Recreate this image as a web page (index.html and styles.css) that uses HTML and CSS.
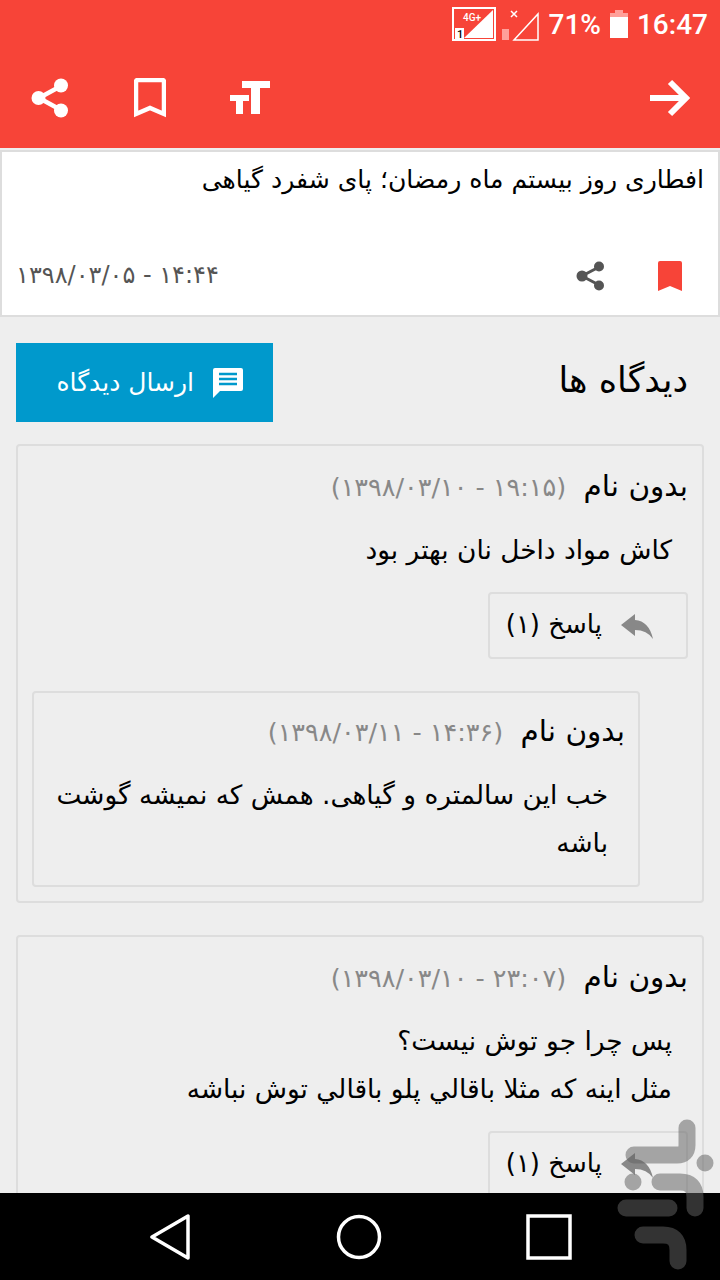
FILE: index.html
```html
<!DOCTYPE html>
<html lang="fa">
<head>
  <meta charset="UTF-8">
  <meta name="viewport" content="width=device-width, initial-scale=1.0">
  <title>دیدگاه ها</title>
  <link rel="stylesheet" href="styles.css">
</head>
<body>
  <header class="appbar">
    <div class="status">
      <svg class="sim" width="46" height="34" viewBox="0 0 46 34">
        <rect x="1" y="1" width="42" height="32" fill="none" stroke="#fff" stroke-width="2"/>
        <path d="M12 31 L41 3 V31 Z" fill="#fff"/>
        <rect x="3" y="21" width="9" height="11" fill="#fff"/>
        <text x="5" y="31" class="sim-num">1</text>
        <text x="11" y="14" class="sim-net">4G+</text>
      </svg>
      <svg class="sim2" width="38" height="34" viewBox="0 0 38 34">
        <path d="M9 4 l6 6 M15 4 l-6 6" stroke="#fff" stroke-width="1.5"/>
        <path d="M36 7 V33 H12 Z" fill="none" stroke="#fff" stroke-width="1.5"/>
        <rect x="0" y="22" width="7" height="11" fill="#ffa09a"/>
      </svg>
      <span class="pct">71%</span>
      <svg class="batt" width="18" height="28" viewBox="0 0 18 28">
        <path d="M5 0 H13 V3 H18 V9 H0 V3 H5 Z" fill="#ff9f99"/>
        <rect y="7" width="18" height="21" fill="#fff"/>
      </svg>
      <span class="clock">16:47</span>
    </div>
    <div class="tools">
      <svg class="tool tool-share" width="38" height="40" viewBox="0 0 38 40">
        <path d="M30 8 L8 20 L30 32" fill="none" stroke="#fff" stroke-width="4.5"/>
        <circle cx="30" cy="7.5" r="7" fill="#fff"/>
        <circle cx="7.5" cy="20" r="7" fill="#fff"/>
        <circle cx="30" cy="32.5" r="7" fill="#fff"/>
      </svg>
      <svg class="tool tool-mark" width="32" height="40" viewBox="0 0 32 40">
        <path d="M4 2 H28 Q30 2 30 4 V36 L16 30 L2 36 V4 Q2 2 4 2 Z" fill="none" stroke="#fff" stroke-width="4.5"/>
      </svg>
      <svg class="tool tool-font" width="42" height="34" viewBox="0 0 42 34">
        <path d="M13 0 H41 V7 H31 V33 H22 V7 H13 Z M1 14 H20 V20 H14 V33 H7 V20 H1 Z" fill="#fff"/>
      </svg>
      <svg class="tool-back" width="42" height="38" viewBox="0 0 42 38">
        <path d="M2 19 H38 M22 3 L38 19 L22 35" fill="none" stroke="#fff" stroke-width="6"/>
      </svg>
    </div>
  </header>

  <main class="content" dir="rtl">
    <article class="post">
      <h1 class="post-title">افطاری روز بیستم ماه رمضان؛ پای شفرد گیاهی</h1>
      <div class="post-foot">
        <svg class="mark" width="24" height="30" viewBox="0 0 24 30">
          <path d="M2 0 H22 Q24 0 24 2 V30 L12 25 L0 30 V2 Q0 0 2 0 Z" fill="#f74438"/>
        </svg>
        <svg class="share" width="30" height="30" viewBox="0 0 30 30">
          <path d="M23 6 L6 15 L23 24" fill="none" stroke="#555" stroke-width="3"/>
          <circle cx="23" cy="5.5" r="5" fill="#555"/>
          <circle cx="6" cy="15" r="5.5" fill="#555"/>
          <circle cx="23" cy="24.5" r="5" fill="#555"/>
        </svg>
        <bdi class="post-date" dir="ltr">۱۳۹۸/۰۳/۰۵ - ۱۴:۴۴</bdi>
      </div>
    </article>

    <div class="section-head">
      <h2>دیدگاه ها</h2>
      <a class="send-btn">
        <svg width="32" height="32" viewBox="0 0 32 32">
          <path d="M3 1 H29 Q31 1 31 3 V22 Q31 24 29 24 H8 L1 31 V3 Q1 1 3 1 Z" fill="#fff"/>
          <path d="M7 7 H25 M7 12 H25 M7 17 H25" stroke="#0099cc" stroke-width="2.4"/>
        </svg>
        ارسال دیدگاه
      </a>
    </div>

    <section class="comment">
      <div class="who">بدون نام <bdi class="when" dir="ltr">(۱۳۹۸/۰۳/۱۰ - ۱۹:۱۵)</bdi></div>
      <p class="text">کاش مواد داخل نان بهتر بود</p>
      <a class="reply">
        <svg width="32" height="26" viewBox="0 0 32 26">
          <path d="M0 12 L14 1 V7 Q28 8 32 26 Q26 17 14 17 V23 Z" fill="#888"/>
        </svg>
        <span class="reply-label">پاسخ (۱)</span>
      </a>
      <div class="child">
        <div class="who who-child">بدون نام <bdi class="when" dir="ltr">(۱۳۹۸/۰۳/۱۱ - ۱۴:۳۶)</bdi></div>
        <p class="text">خب این سالمتره و گیاهی. همش که نمیشه گوشت باشه</p>
      </div>
    </section>

    <section class="comment">
      <div class="who">بدون نام <bdi class="when" dir="ltr">(۱۳۹۸/۰۳/۱۰ - ۲۳:۰۷)</bdi></div>
      <p class="text">پس چرا جو توش نیست؟<br>مثل اینه که مثلا باقالي پلو باقالي توش نباشه</p>
      <a class="reply">
        <svg width="32" height="26" viewBox="0 0 32 26">
          <path d="M0 12 L14 1 V7 Q28 8 32 26 Q26 17 14 17 V23 Z" fill="#888"/>
        </svg>
        <span class="reply-label">پاسخ (۱)</span>
      </a>
    </section>
  </main>

  <nav class="navbar">
    <svg width="42" height="46" viewBox="0 0 42 46">
      <path d="M39 2 V44 L3 23 Z" fill="none" stroke="#fff" stroke-width="3.5" stroke-linejoin="round"/>
    </svg>
    <svg width="46" height="46" viewBox="0 0 46 46">
      <circle cx="23" cy="23" r="20.5" fill="none" stroke="#fff" stroke-width="3.5"/>
    </svg>
    <svg width="46" height="46" viewBox="0 0 46 46">
      <rect x="2" y="2" width="42" height="42" fill="none" stroke="#fff" stroke-width="3.5"/>
    </svg>
  </nav>

  <!-- store watermark over the corner -->
  <svg class="watermark" width="120" height="170" viewBox="600 1110 120 170">
    <g fill="none" stroke="#626262" stroke-width="17" stroke-linecap="round" stroke-linejoin="round">
      <path d="M687 1128 V1145 Q687 1155 677 1155 H634"/>
      <path d="M660 1182 H680 Q695 1182 695 1197 V1208"/>
      <path d="M626 1208 H669"/>
      <path d="M643 1235 H663 Q678 1235 678 1250 V1261"/>
    </g>
    <circle cx="705" cy="1163" r="8.5" fill="#626262"/>
    <circle cx="633" cy="1182" r="8.5" fill="#626262"/>
  </svg>
</body>
</html>
```

FILE: styles.css
```css
* {
  box-sizing: border-box;
}

html, body {
  margin: 0;
  padding: 0;
}

body {
  position: relative;
  width: 720px;
  height: 1280px;
  overflow: hidden;
  display: flex;
  flex-direction: column;
  background-color: #eeeeee;
  color: #000000;
  font-family: "DejaVu Sans", "Noto Sans", sans-serif;
}

.appbar {
  flex: 0 0 148px;
  background-color: #f74438;
  color: #ffffff;
}

.status {
  height: 48px;
  display: flex;
  justify-content: flex-end;
  align-items: center;
  padding-right: 12px;
  font-family: Roboto, sans-serif;
  font-weight: 500;
  font-size: 28px;
}

.sim {
  margin-right: 4px;
}

.sim-num {
  font-size: 11px;
  fill: #000000;
}

.sim-net {
  font-size: 10px;
  fill: #ffffff;
}

.sim2 {
  margin-right: 9px;
}

.pct {
  margin-right: 9px;
}

.batt {
  margin-right: 9px;
}

.tools {
  height: 100px;
  display: flex;
  align-items: center;
  padding: 0 30px 0 31px;
}

.tool-mark {
  margin-left: 65px;
}

.tool-font {
  margin-left: 63px;
}

.tool-back {
  margin-left: auto;
}

.content {
  flex: 1;
  min-height: 0;
  overflow: hidden;
}

.post {
  height: 167px;
  margin-top: 2px;
  padding: 12px 14px 0;
  background-color: #ffffff;
  border: 2px solid #dddddd;
  display: flex;
  flex-direction: column;
}

.post-title {
  margin: 0;
  font-size: 25.1px;
  font-weight: normal;
  line-height: 32px;
}

.post-foot {
  margin-top: auto;
  height: 62px;
  display: flex;
  align-items: flex-start;
  padding-top: 8px;
}

.mark {
  margin-right: 22px;
}

.share {
  margin-right: 52px;
}

.post-date {
  margin-right: auto;
  color: #555555;
  font-size: 24px;
}

.section-head {
  display: flex;
  justify-content: space-between;
  align-items: center;
  padding: 26px 32px 22px 16px;
}

.section-head h2 {
  margin: 0 0 6px;
  font-size: 35px;
  font-weight: normal;
}

.send-btn {
  width: 257px;
  height: 79px;
  display: flex;
  align-items: center;
  gap: 18px;
  padding-right: 29px;
  background-color: #0099cc;
  color: #ffffff;
  font-size: 25px;
}

.comment {
  margin: 0 16px 32px;
  padding: 18px 0 14px;
  border: 2px solid #dddddd;
  border-radius: 4px;
}

.who {
  padding-right: 14px;
  font-size: 29.5px;
  line-height: 44px;
}

.who-child {
  padding-right: 13px;
}

.when {
  margin-right: 8px;
  color: #888888;
  font-size: 25.5px;
}

.text {
  margin: 17px 30px 0 16px;
  font-size: 26.4px;
  line-height: 48px;
}

.reply {
  width: 200px;
  height: 67px;
  margin: 18px 14px 32px 0;
  display: flex;
  align-items: center;
  gap: 19px;
  padding-right: 33px;
  border: 2px solid #dddddd;
  border-radius: 4px;
  font-size: 26px;
}

.reply-label {
  margin-bottom: 4px;
}

.child {
  width: 608px;
  margin-right: 62px;
  padding: 16px 0 18px;
  border: 2px solid #dddddd;
  border-radius: 4px;
}

.navbar {
  flex: 0 0 87px;
  display: flex;
  align-items: center;
  justify-content: space-between;
  padding: 0 148px 0 149px;
  background-color: #000000;
}

.watermark {
  position: absolute;
  right: 0;
  bottom: 0;
  opacity: 0.52;
}
```
